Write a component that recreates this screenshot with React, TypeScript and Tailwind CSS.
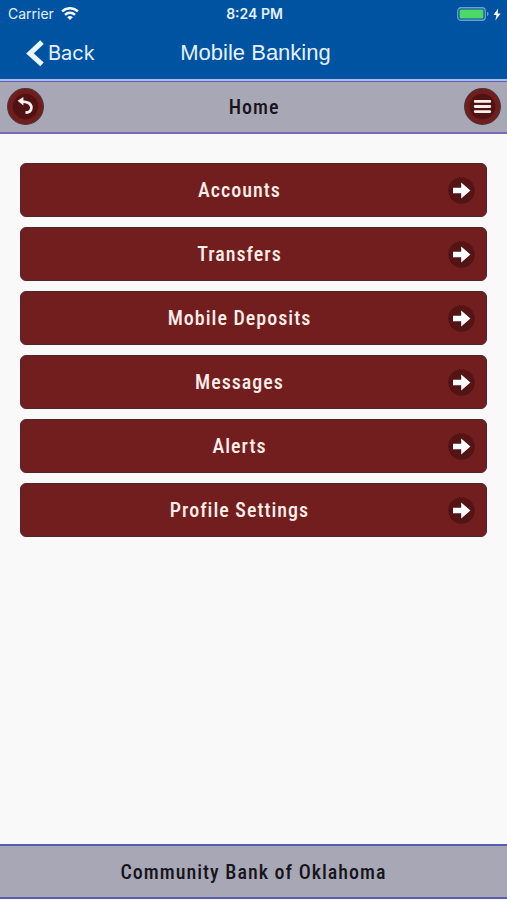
const menuItems = [
  { id: "accounts", label: "Accounts" },
  { id: "transfers", label: "Transfers" },
  { id: "deposits", label: "Mobile Deposits" },
  { id: "messages", label: "Messages" },
  { id: "alerts", label: "Alerts" },
  { id: "settings", label: "Profile Settings" },
];

function StatusBar() {
  return (
    <div className="grid grid-cols-3 items-center h-7 pl-2 pr-1.5 text-sm text-[#e4f1ff]">
      <div className="flex items-center gap-1.5">
        <span>Carrier</span>
        <svg width="20" height="14" viewBox="0 0 20 14" fill="none" stroke="#f4faff" strokeWidth="2.5">
          <path d="M2.1 4.4a11.4 11.4 0 0 1 15.8 0" />
          <path d="M5 7.8a7 7 0 0 1 10 0" />
          <path d="M10 12.9 7.2 10.3a3.9 3.9 0 0 1 5.6 0z" fill="#f4faff" stroke="none" />
        </svg>
      </div>
      <span className="text-center font-semibold">8:24 PM</span>
      <div className="flex items-center justify-end gap-1">
        <svg width="32" height="14" viewBox="0 0 32 14">
          <rect x="0.75" y="0.75" width="27.5" height="12.5" rx="3" fill="none" stroke="#6f9fd6" strokeWidth="1.3" />
          <rect x="2.6" y="2.6" width="23.8" height="8.8" rx="1" fill="#4cd964" />
          <path d="M30 4.8q1.6 .6 1.6 2.2t-1.6 2.2z" fill="#6f9fd6" />
        </svg>
        <svg width="8" height="13" viewBox="0 0 8 13">
          <path d="M5.2 0.5 0.4 7h3L2.4 12.5 7.6 5.6h-3z" fill="#fff" />
        </svg>
      </div>
    </div>
  );
}

function TitleBar() {
  return (
    <div className="grid grid-cols-[1fr_auto_1fr] items-start h-[51px] pl-6 pr-5 text-[22px] leading-7 text-[#e4f1ff]">
      <button type="button" className="flex items-center w-fit pt-[11px] text-xl leading-7">
        <svg width="24" height="28" viewBox="0 0 24 28" fill="none" stroke="#eaf5ff" strokeWidth="5.2">
          <path d="M18 3.2 6 14.4l12 11" />
        </svg>
        Back
      </button>
      <h1 className="pt-[11px] font-['Liberation_Sans',Arial,sans-serif]">Mobile Banking</h1>
    </div>
  );
}

function PageHeader() {
  return (
    <div className="flex items-center justify-between h-[55px] px-1.5 bg-[#a8a7b5] border-t-2 border-b-2 border-t-[#a6bdf0] border-b-[#7a6cb4] shadow-[inset_0_1px_0_#6a5db5]">
      <button type="button" aria-label="Go back">
        <svg width="38" height="37" viewBox="-1 0 38 37">
          <circle cx="18.5" cy="18.5" r="17.8" fill="#731c1c" stroke="#4b3437" strokeWidth="1.3" />
          <circle cx="18.5" cy="18.5" r="12.8" fill="#501213" />
          <path d="M14.5 13.6c5.8-.2 9.9 2 9.9 5.8 0 3.2-2.4 5-5.9 5.3" fill="none" stroke="#fff5f0" strokeWidth="2.7" />
          <path d="M10.6 12.7 16.4 9v8.6z" fill="#fff5f0" />
        </svg>
      </button>
      <h2 className="text-xl font-medium tracking-wider text-[#17151b]">Home</h2>
      <button type="button" aria-label="Menu">
        <svg width="37" height="37" viewBox="0 0 37 37">
          <circle cx="18.5" cy="18.5" r="17.8" fill="#731c1c" stroke="#4b3437" strokeWidth="1.3" />
          <circle cx="18.5" cy="18.5" r="12.8" fill="#501213" />
          <path d="M11.2 13.4h14.6M11.2 18.5h14.6M11.2 23.6h14.6" stroke="#fff0ec" strokeWidth="2.8" strokeLinecap="round" />
        </svg>
      </button>
    </div>
  );
}

export default function App() {
  return (
    <div className="flex flex-col min-h-screen pb-px bg-[#f9f9fa] font-['Roboto_Condensed',Roboto,sans-serif]">
      <header>
        <div className="bg-[#0053a0] font-[Inter,sans-serif]">
          <StatusBar />
          <TitleBar />
        </div>
        <PageHeader />
      </header>

      <main className="flex-1 px-5 pt-[29px]">
        <nav className="flex flex-col gap-2.5">
          {menuItems.map(({ id, label }) => (
            <a
              key={id}
              href={`#${id}`}
              className="flex items-center h-[54px] pl-2.5 pr-[11px] rounded-md border border-[#4f2530] bg-[#731e1e] text-xl font-medium tracking-wider text-[#fdeee9]"
            >
              <span className="flex-1 text-center">{label}</span>
              <svg width="27" height="27" viewBox="0 0 27 27">
                <circle cx="13.5" cy="13.5" r="13.3" fill="#551414" />
                <path d="M5 10.8h8.2V5.4L22.4 13.5l-9.2 8.1v-5.4H5z" fill="#fff" />
              </svg>
            </a>
          ))}
        </nav>
      </main>

      <footer className="flex items-center justify-center h-[55px] bg-[#a8a7b5] border-y-2 border-[#5c5bb4] text-xl font-medium tracking-wider text-[#17151b]">
        Community Bank of Oklahoma
      </footer>
    </div>
  );
}
